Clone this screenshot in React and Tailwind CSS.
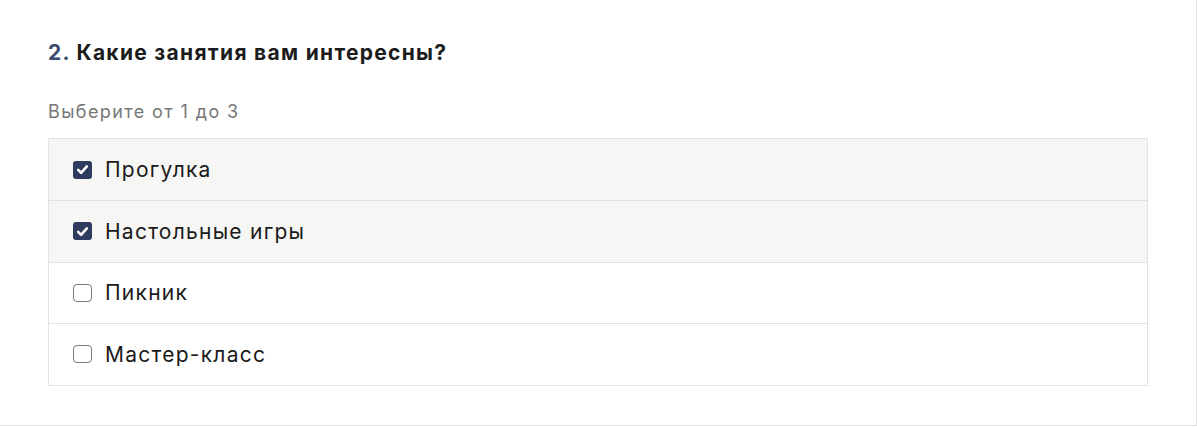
import { useState } from "react";

const options = [
  { id: "walk", label: "Прогулка" },
  { id: "games", label: "Настольные игры" },
  { id: "picnic", label: "Пикник" },
  { id: "master", label: "Мастер-класс" },
];

function Box({ checked }) {
  if (checked) {
    return (
      <span className="flex h-[18px] w-[19px] shrink-0 items-center justify-center rounded-[3px] bg-[#2e3b5e]">
        <svg width="13" height="13" viewBox="0 0 12 12" fill="none">
          <path d="M2 6.4l2.7 2.7L10 3.2" stroke="#fff" strokeWidth="2.4" strokeLinecap="round" strokeLinejoin="round" />
        </svg>
      </span>
    );
  }
  return <span className="h-[18px] w-[19px] shrink-0 rounded-[4px] border border-[#7b7b7b] bg-white" />;
}

export default function App() {
  const [picked, setPicked] = useState(["walk", "games"]);

  const toggle = (id) =>
    setPicked((p) => (p.includes(id) ? p.filter((x) => x !== id) : [...p, id]));

  return (
    <div className="h-[428px] w-[1197px] bg-white font-['Inter',sans-serif]">
      <div className="h-[426px] w-[1197px] border-r border-b border-[#e3e3e3] px-12 pt-[40px]">
        <h2 className="text-[21px] font-bold leading-[26px] tracking-[1.3px] text-[#1c1c1c]">
          <span className="text-[#3b4a6e]">2.</span> Какие занятия вам интересны?
        </h2>
        <p className="mt-[35px] text-[18px] leading-[22px] tracking-[1.4px] text-[#777]">Выберите от 1 до 3</p>
        <div className="mt-[15px] w-[1100px] border border-[#e2e2e2]">
          {options.map((o, i) => {
            const on = picked.includes(o.id);
            return (
              <label
                key={o.id}
                onClick={() => toggle(o.id)}
                className={`flex cursor-pointer items-center gap-[13px] pl-[24px] ${
                  i > 0 ? "h-[61.5px] border-t border-[#e2e2e2]" : "h-[61px]"
                } ${on ? "bg-[#f6f6f4]" : "bg-white"}`}
              >
                <Box checked={on} />
                <span className="text-[21px] tracking-[1.25px] text-[#1a1a1a]">{o.label}</span>
              </label>
            );
          })}
        </div>
      </div>
    </div>
  );
}
